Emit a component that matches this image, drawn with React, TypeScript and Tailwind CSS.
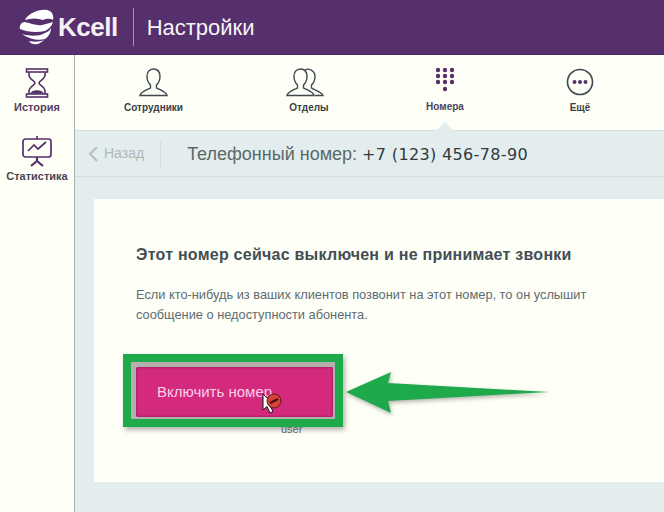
import React from 'react';

const KcellLogo = () => (
  <svg width="35" height="36" viewBox="0 0 35 36" className="shrink-0">
    <path d="M6 11 C9 5 19 0 28 1 C33 2 35 6 34 11 C30 9 27 10 24 11 C18 9 12 9 6 11 Z" fill="#fff" />
    <path d="M1 20 C0 17 2 14 5 13 C11 14 18 17 23 16 C27 15 31 14 34 13 C33 17 30 20 26 22 C17 24 8 23 1 20 Z" fill="#fff" />
    <path d="M3 25 C10 27 19 28 26 24 C29 23 31 21 32 19 C32 24 29 28 26 30 C19 32 10 30 3 25 Z" fill="#fff" />
    <path d="M10 32 C15 33 21 33 25 31 C22 34 18 36 15 35 C13 35 11 34 10 32 Z" fill="#fff" />
  </svg>
);

const HourglassIcon = () => (
  <svg width="24" height="30" viewBox="0 0 24 30" fill="none" stroke="#55306c" strokeWidth="1.6">
    <rect x="1.5" y="1" width="21" height="3" />
    <rect x="1.5" y="26" width="21" height="3" />
    <path d="M4 4 V7 C4 11 10 13 10 15 C10 17 4 19 4 23 V26 M20 4 V7 C20 11 14 13 14 15 C14 17 20 19 20 23 V26" />
    <path d="M5 25.5 C7 21 17 21 19 25.5 Z" fill="#55306c" stroke="none" />
  </svg>
);

const StatsIcon = () => (
  <svg width="30" height="32" viewBox="0 0 30 32" fill="none" stroke="#55306c" strokeWidth="1.7">
    <path d="M15 0 V3" />
    <rect x="1" y="3" width="28" height="18" rx="2.5" />
    <path d="M6 15 L12 9 L16 13 L24 6" />
    <path d="M15 21 V25 M15 25 L9 30 M15 25 L21 30" strokeWidth="2.2" />
  </svg>
);

const UserPath = () => (
  <path d="M14.5 1 C10 1 8 4.5 8 8.5 C8 12 9.5 15 11.5 17 V20 C8 22 2 23.5 1 27.5 H28 C27 23.5 21 22 17.5 20 V17 C19.5 15 21 12 21 8.5 C21 4.5 19 1 14.5 1 Z" />
);

const DialIcon = () => (
  <svg width="20" height="26" viewBox="0 0 20 26" fill="#55306c">
    {[3, 9, 15].map(y => [3, 10, 17].map(x => <circle key={`${x}-${y}`} cx={x} cy={y} r="2.2" />))}
    <circle cx="10" cy="22" r="2.2" />
  </svg>
);

const MoreIcon = () => (
  <svg width="28" height="28" viewBox="0 0 28 28" fill="none">
    <circle cx="14" cy="14" r="12.5" stroke="#3f4a50" strokeWidth="1.6" />
    <circle cx="8.5" cy="14" r="2" fill="#55306c" />
    <circle cx="14" cy="14" r="2" fill="#55306c" />
    <circle cx="19.5" cy="14" r="2" fill="#55306c" />
  </svg>
);

const App: React.FC = () => {
  return (
    <div className="w-[664px] h-[512px] overflow-hidden flex flex-col bg-[#e4edee] font-['Liberation_Sans',sans-serif]">
      {/* Header */}
      <div className="h-[55px] shrink-0 bg-[#55306c] flex items-center pl-[19px] border-b border-[#4a2a5e]">
        <KcellLogo />
        <span className="ml-[4px] text-[26px] font-bold text-[#f6f0f6] tracking-[-0.5px]">Kcell</span>
        <div className="ml-[15px] w-px h-[38px] bg-[#a78fb3]"></div>
        <span className="ml-[13px] text-[22px] text-[#f8f4f8]">Настройки</span>
      </div>

      <div className="flex flex-1 min-h-0">
        {/* Sidebar */}
        <div className="w-[75px] shrink-0 bg-[#fefff6] border-r border-[#a9b0ad] flex flex-col items-center">
          <div className="mt-[13px] flex flex-col items-center">
            <HourglassIcon />
            <span className="mt-[2px] text-[11px] font-bold text-[#55405f] leading-[14px]">История</span>
          </div>
          <div className="mt-[22px] flex flex-col items-center">
            <StatsIcon />
            <span className="mt-[1px] text-[11px] font-bold text-[#4a4552] leading-[14px]">Статистика</span>
          </div>
        </div>

        <div className="flex-1 min-w-0 flex flex-col">
          {/* Nav */}
          <div className="h-[76px] shrink-0 bg-[#fefff6] border-b border-[#d5dedd] grid grid-cols-[157px_154px_118px_152px]">
            <div className="flex flex-col items-center pt-[13px]">
              <svg width="30" height="29" viewBox="0 0 30 29" fill="none" stroke="#3f4a50" strokeWidth="1.4">
                <UserPath />
              </svg>
              <span className="mt-[5px] text-[10px] font-bold text-[#3a3f45] leading-[12px]">Сотрудники</span>
            </div>
            <div className="flex flex-col items-center pt-[13px]">
              <svg width="38" height="29" viewBox="0 0 38 29" fill="none" stroke="#3f4a50" strokeWidth="1.4" className="mr-[8px]">
                <path d="M19 2 C22 0 29 2 29 8.5 C29 12 27.5 15 25.5 17 V20 C28 22 36 24 37 27.5 H29" />
                <UserPath />
              </svg>
              <span className="mt-[5px] text-[10px] font-bold text-[#3a3f45] leading-[12px]">Отделы</span>
            </div>
            <div className="relative flex flex-col items-center pt-[12px]">
              <DialIcon />
              <span className="mt-[8px] text-[10px] font-bold text-[#4d4460] leading-[12px]">Номера</span>
              <div className="absolute left-1/2 -bottom-[1px] -ml-[9px] w-0 h-0 border-x-[9px] border-x-transparent border-b-[9px] border-b-[#e4edee]"></div>
            </div>
            <div className="flex flex-col items-center pt-[13px]">
              <MoreIcon />
              <span className="mt-[6px] text-[10px] font-bold text-[#3a3f45] leading-[12px]">Ещё</span>
            </div>
          </div>

          {/* Back bar */}
          <div className="h-[46px] shrink-0 flex items-center border-b border-[#d5dedd]">
            <svg width="12" height="18" viewBox="0 0 12 18" fill="none" stroke="#b4bfbf" strokeWidth="2" className="ml-[12px]">
              <path d="M10 2 L3 9 L10 16" />
            </svg>
            <span className="ml-[5px] text-[14px] text-[#adb8b8]">Назад</span>
            <div className="ml-[16px] w-px h-[26px] bg-[#d5dedd]"></div>
            <span className="ml-[26px] mt-[2px] text-[18px] text-[#5a6868] whitespace-nowrap">
              Телефонный номер: <span className="font-['DejaVu_Sans',sans-serif] text-[#2e3a3e] text-[16px] tracking-[0.35px]">+7 (123) 456-78-90</span>
            </span>
          </div>

          {/* Card */}
          <div className="flex-1 min-h-0 pt-[22px] pl-[19px] pb-[30px]">
            <div className="relative h-full bg-[#fefff6] pl-[42px] pt-[46px]">
              <h2 className="text-[16px] font-bold text-[#434e54] leading-[20px] tracking-[0.25px]">
                Этот номер сейчас выключен и не принимает звонки
              </h2>
              <p className="mt-[20px] text-[12.8px] text-[#5d6b72] leading-[20px] w-[470px]">
                Если кто-нибудь из ваших клиентов позвонит на этот номер, то он услышит сообщение о недоступности абонента.
              </p>

              {/* Highlighted button */}
              <div className="mt-[29px] -ml-[13px] w-[220px] h-[73px] border-[8px] border-[#1eaa4a] bg-[#b5b0ae] pt-[5px] pl-[5px] shadow-[2px_3px_5px_rgba(0,0,0,0.3)]">
                <button className="w-[197px] h-[50px] rounded-[2px] bg-[#d42a7e] shadow-[inset_0_0_3px_rgba(90,20,60,0.7)] text-left pl-[21px] text-[15px] text-[#fbcfe8]">
                  Включить номер
                </button>
              </div>

              <span className="absolute left-[187px] top-[224px] text-[11px] leading-[12px] text-[#5f6465]">user</span>

              {/* Cursor over the button */}
              <svg width="24" height="26" viewBox="0 0 24 26" className="absolute left-[167px] top-[192px]">
                <path d="M2 3 V19 L6 15.5 L9 22 L12 20.5 L9 14.5 H14 Z" fill="#fff" stroke="#111" strokeWidth="1" />
                <circle cx="13" cy="10" r="7" fill="#d8403a" stroke="#5b1a18" strokeWidth="1" />
                <path d="M9 12 L17 8" stroke="#3a1210" strokeWidth="2" />
              </svg>

              {/* Green arrow */}
              <svg width="206" height="44" viewBox="0 0 206 44" className="absolute left-[251px] top-[172px] drop-shadow-[1px_2px_2px_rgba(0,0,0,0.3)]">
                <path d="M1 21 L46 1 L43 12 L204 21 L43 30 L46 42 Z" fill="#1eaa4a" />
              </svg>
            </div>
          </div>
        </div>
      </div>
    </div>
  );
};

export default App;
